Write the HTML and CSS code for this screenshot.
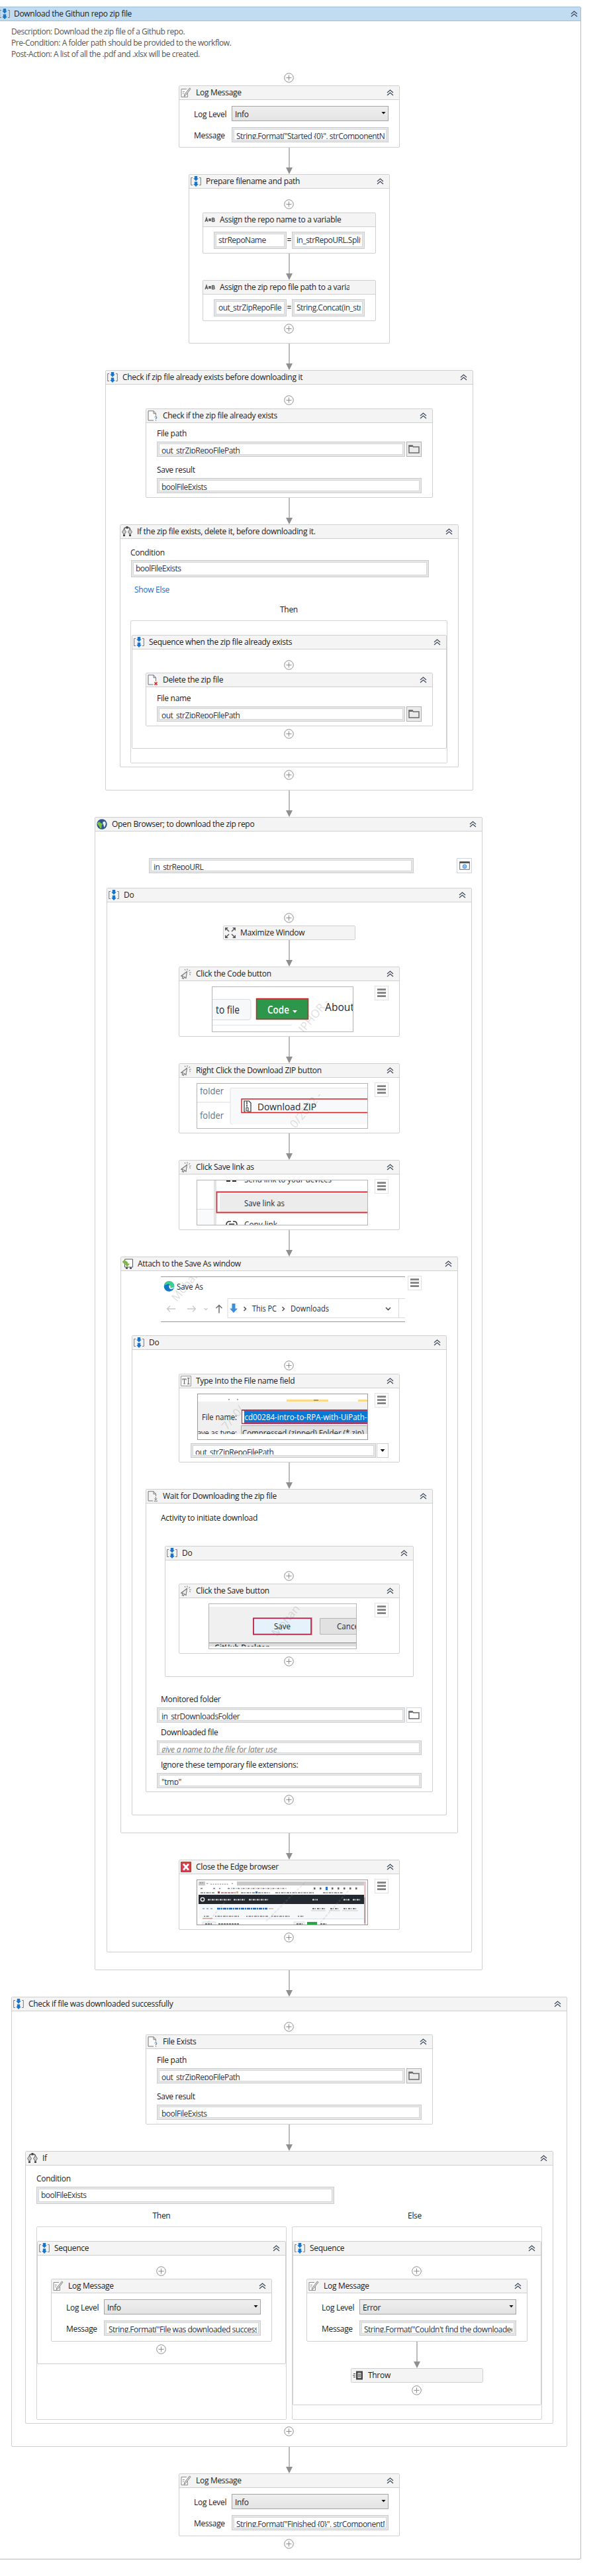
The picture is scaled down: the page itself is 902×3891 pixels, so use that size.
FILE: index.html
```html
<!DOCTYPE html>
<html lang="en">
<head>
<meta charset="utf-8">
<title>Download the Githun repo zip file</title>
<link rel="stylesheet" href="styles.css">
</head>
<body>
<svg class="defs" width="0" height="0">
  <symbol id="seq" viewBox="0 0 16 16"><path d="M3 2.5H.7v11H3M13 2.5h2.3v11H13" fill="none" stroke="#777" stroke-width="1"/><path d="M5.8 0h4.4v3.6h1.6L8 7.6 4.200 3.600h1.600zM5.800 8.400h4.400V12h1.600L8 16l-3.800-4h1.600z" fill="#1c74c9"/></symbol>
  <symbol id="up" viewBox="0 0 11 10"><path d="M1 5l4.500-4L10 5M1 9l4.500-4L10 9" fill="none" stroke="#3b4658" stroke-width="1.200"/></symbol>
  <symbol id="plus" viewBox="0 0 16 15"><circle cx="7.500" cy="7.500" r="6.800" fill="#fff" stroke="#8e8e8e"/><path d="M7.500 3.500v8M3.500 7.500h8" stroke="#8e8e8e"/></symbol>
  <symbol id="down" viewBox="0 0 10 40"><path d="M5 0v32" stroke="#8f8f8f" stroke-width="1.200"/><path d="M0 30h10L5 40z" fill="#8f8f8f"/></symbol>
  <symbol id="log" viewBox="0 0 16 16"><path d="M9 2.500H1v12h9.500V9" fill="#fafafa" stroke="#8c8c8c"/><path d="M13.500 1l1.500 1.200L7.500 12l-2.300 1.500.5-2.700z" fill="#ddd" stroke="#777" stroke-width=".9"/><path d="M3 6.500h3M3 9h2" stroke="#999"/></symbol>
  <symbol id="ab" viewBox="0 0 16 16"><path d="M1 11L3 5l2 6M1.800 9h2.400M11.500 5v6M11.500 5.500h2.200q1 0 1 1.200t-1 1.200h-2.200 2.500q1.200 0 1.200 1.300t-1.200 1.300h-2.500M6 7h4M6 9h4M8 6v4" fill="none" stroke="#555" stroke-width="1.300"/></symbol>
  <symbol id="fileq" viewBox="0 0 16 16"><path d="M9 15H1V.7h8l3.500 3.800V8M9 .7v4h3.500" fill="#fafafa" stroke="#777"/><path d="M10.800 10.500q.3-1.300 1.600-1.300 1.500 0 1.500 1.300 0 1-1.400 1.800v1M12.500 14.500v1.200" fill="none" stroke="#3a82d2" stroke-width="1.100"/></symbol>
  <symbol id="filex" viewBox="0 0 16 16"><path d="M8.500 15H1V.7h8l3.500 3.800V10M9 .7v4h3.500" fill="#fafafa" stroke="#6d7480"/><path d="M10.500 11.500l4 4M14.500 11.500l-4 4" stroke="#e02020" stroke-width="1.700"/></symbol>
  <symbol id="filed" viewBox="0 0 16 16"><path d="M8 15H1V.7h8l3.500 3.800V8M9 .7v4h3.500M9.500 15.300H15M12.300 9v4.500M10.300 11.500l2 2 2-2" fill="none" stroke="#777"/></symbol>
  <symbol id="if" viewBox="0 0 16 16"><path d="M3.500 5q0-3 2.500-3h4q2.500 0 2.500 3M3.500 10v5M12.500 10v5" fill="none" stroke="#555" stroke-width="1.400"/><path d="M6.500 0h3v3.500h-3zM2 12.500h3V15H2zM11 12.500h3V15h-3z" fill="#444"/><path d="M3.500 4l3 4.500-3 4-3-4zM12.500 4l3 4.500-3 4-3-4z" fill="#c9c9c9" stroke="#666"/></symbol>
  <symbol id="globe" viewBox="0 0 16 16"><circle cx="8" cy="8" r="7.700" fill="#2d558f"/><path d="M1 6.500q1-2 3-2.500l2 2 2.500 1.500Q9 9 7.500 10v3.500L6 14.500Q4 12 3.500 10.500 1.500 9.500 1 6.500z" fill="#7cc242"/><path d="M9.500 4.500q3-2 4 1t-2 7.500q-1-2-1-4-2-2-1-4.500z" fill="#e6eef5"/></symbol>
  <symbol id="max" viewBox="0 0 16 16"><path d="M2 2l4 4M14 2l-4 4M2 14l4-4M14 14l-4-4" stroke="#5a5a5a" stroke-width="1.500"/><path d="M0 0h5L0 5zM16 0h-5l5 5zM0 16h5l-5-5zM16 16h-5l5-5z" fill="#5a5a5a"/></symbol>
  <symbol id="click" viewBox="0 0 16 16"><path d="M9.500 4.500L.8 11.200l3 .4-1.600 2.700 2 1.200 1.600-2.800 2.200 2z" fill="#eee" stroke="#777" stroke-width="1.100"/><path d="M7 2.800L6.300.8M10 2.500V.3M12.300 4.300L14 2M13 6.500l2.500-.5M13 8.500l2 1" stroke="#777"/></symbol>
  <symbol id="attach" viewBox="0 0 16 16"><path d="M3.500 1h12v12h-12z" fill="#fff" stroke="#555"/><path d="M5 14.500h3M11 14.500h3" stroke="#333" stroke-width="2"/><path d="M0 5l4-3.500V4q4 0 4 4h2.500L7 12 4 8h1.500Q5.500 6.500 4 6.500V9z" fill="#7dbb42" stroke="#5c9a2b" stroke-width=".5"/></symbol>
  <symbol id="type" viewBox="0 0 16 16"><path d="M.5.500h15v15H.5z" fill="#f7f7f7" stroke="#999"/><path d="M3 6.500V5h5v1.500M5.500 5v7M4.300 12h2.400M10 3.500h3.500M10 12.500h3.500M11.700 3.500v9" fill="none" stroke="#666" stroke-width="1.100"/></symbol>
  <symbol id="close" viewBox="0 0 16 16"><path d="M.5.500h15v15H.5z" fill="#de3a4e" stroke="#9a4a32"/><path d="M4 3.500l8 9M12 3.500l-8 9" stroke="#fff" stroke-width="2.800"/></symbol>
  <symbol id="throw" viewBox="0 0 16 16"><path d="M5 1.500h10v13H5z" fill="#444"/><path d="M7.500 4h5v8h-5z" fill="#eee"/><path d="M8 6h4M8 8h4M8 10h4M1 5.500h3M0 8h4M1 10.500h3" stroke="#444"/></symbol>
  <symbol id="folder" viewBox="0 0 17 13"><path d="M1 12V1h5l1.500 2H16v9z" fill="none" stroke="#6b6b6b" stroke-width="1.500"/><path d="M.5.500h6V3h-6z" fill="#6b6b6b"/></symbol>
  <symbol id="menu" viewBox="0 0 13 14"><path d="M0 1.600h13M0 6.600h13M0 11.600h13" stroke="#808080" stroke-width="2.600"/></symbol>
  <symbol id="web" viewBox="0 0 16 13"><path d="M.7.700h14.600v11.600H.7z" fill="#fff" stroke="#666"/><path d="M.5.500h15v2.500h-15z" fill="#555"/><circle cx="8" cy="7.800" r="2.600" fill="none" stroke="#4a94e0" stroke-width="1.300"/><path d="M8 4.800v6M5 7.800h6" stroke="#4a94e0" stroke-width=".8"/></symbol>
</svg>

<main class="card root">
  <header class="head"><svg class="ico"><use href="#seq"/></svg><h1 class="title">Download the Githun repo zip file</h1><svg class="fold"><use href="#up"/></svg></header>
  <div class="notes">
    <p>Description: Download the zip file of a Github repo.</p>
    <p>Pre-Condition: A folder path should be provided to the workflow.</p>
    <p>Post-Action: A list of all the .pdf and .xlsx will be created.</p>
  </div>
  <div class="lead"><svg class="plus"><use href="#plus"/></svg></div>

  <section class="card w-log log-short">
    <header class="head"><svg class="ico"><use href="#log"/></svg><h2 class="title">Log Message</h2><svg class="fold"><use href="#up"/></svg></header>
    <div class="log-body">
      <label>Log Level</label><div class="select">Info<i></i></div>
      <label>Message</label><div class="field"><span>String.Format("Started {0}", strComponentName)</span></div>
    </div>
  </section>
  <svg class="arrow"><use href="#down"/></svg>

  <section class="card w-prep">
    <header class="head"><svg class="ico"><use href="#seq"/></svg><h2 class="title">Prepare filename and path</h2><svg class="fold"><use href="#up"/></svg></header>
    <div class="lead tall"><svg class="plus"><use href="#plus"/></svg></div>
    <section class="card w-assign">
      <header class="head"><svg class="ico"><use href="#ab"/></svg><h3 class="title">Assign the repo name to a variable</h3></header>
      <div class="assign"><div class="field big"><span>strRepoName</span></div><b>=</b><div class="field big"><span>in_strRepoURL.Split</span></div></div>
    </section>
    <svg class="arrow"><use href="#down"/></svg>
    <section class="card w-assign">
      <header class="head"><svg class="ico"><use href="#ab"/></svg><h3 class="title">Assign the zip repo file path to a variable</h3></header>
      <div class="assign"><div class="field big"><span>out_strZipRepoFile</span></div><b>=</b><div class="field big"><span>String.Concat(in_str</span></div></div>
    </section>
    <div class="tail"><svg class="plus"><use href="#plus"/></svg></div>
  </section>
  <svg class="arrow"><use href="#down"/></svg>

  <section class="card w-check">
    <header class="head"><svg class="ico"><use href="#seq"/></svg><h2 class="title">Check if zip file already exists before downloading it</h2><svg class="fold"><use href="#up"/></svg></header>
    <div class="lead tall"><svg class="plus"><use href="#plus"/></svg></div>
    <section class="card w-file file-tight">
      <header class="head"><svg class="ico"><use href="#fileq"/></svg><h3 class="title">Check if the zip file already exists</h3><svg class="fold"><use href="#up"/></svg></header>
      <div class="form">
        <label>File path</label>
        <div class="row"><div class="field"><span>out_strZipRepoFilePath</span></div><div class="btn"><svg class="folder"><use href="#folder"/></svg></div></div>
        <label class="next">Save result</label>
        <div class="field"><span>boolFileExists</span></div>
      </div>
    </section>
    <svg class="arrow"><use href="#down"/></svg>
    <section class="card w-if1">
      <header class="head"><svg class="ico"><use href="#if"/></svg><h3 class="title">If the zip file exists, delete it, before downloading it.</h3><svg class="fold"><use href="#up"/></svg></header>
      <div class="cond">
        <label>Condition</label>
        <div class="field big"><span>boolFileExists</span></div>
        <a class="link">Show Else</a>
        <p class="branch-name">Then</p>
        <div class="branch">
          <section class="card w-inner">
            <header class="head"><svg class="ico"><use href="#seq"/></svg><h4 class="title">Sequence when the zip file already exists</h4><svg class="fold"><use href="#up"/></svg></header>
            <div class="lead"><svg class="plus"><use href="#plus"/></svg></div>
            <section class="card w-file delete">
              <header class="head"><svg class="ico"><use href="#filex"/></svg><h5 class="title">Delete the zip file</h5><svg class="fold"><use href="#up"/></svg></header>
              <div class="form">
                <label>File name</label>
                <div class="row"><div class="field"><span>out_strZipRepoFilePath</span></div><div class="btn"><svg class="folder"><use href="#folder"/></svg></div></div>
              </div>
            </section>
            <div class="tail"><svg class="plus"><use href="#plus"/></svg></div>
          </section>
        </div>
      </div>
    </section>
    <div class="tail tall"><svg class="plus"><use href="#plus"/></svg></div>
  </section>
  <svg class="arrow"><use href="#down"/></svg>

  <section class="card w-open">
    <header class="head"><svg class="ico"><use href="#globe"/></svg><h2 class="title">Open Browser; to download the zip repo</h2><svg class="fold"><use href="#up"/></svg></header>
    <div class="url-row"><div class="field"><span>in_strRepoURL</span></div><div class="btn white"><svg class="web"><use href="#web"/></svg></div></div>
    <section class="card w-do1">
      <header class="head"><svg class="ico"><use href="#seq"/></svg><h3 class="title">Do</h3><svg class="fold"><use href="#up"/></svg></header>
      <div class="lead"><svg class="plus"><use href="#plus"/></svg></div>
      <section class="card mini"><header class="head"><svg class="ico"><use href="#max"/></svg><h4 class="title">Maximize Window</h4></header></section>
      <svg class="arrow"><use href="#down"/></svg>

      <section class="card w-log click">
        <header class="head"><svg class="ico"><use href="#click"/></svg><h4 class="title">Click the Code button</h4><svg class="fold"><use href="#up"/></svg></header>
        <div class="shot-row"><div class="shot"><svg width="212" height="67">
          <rect x="-6" y="18.500" width="64" height="31" rx="4" fill="#f6f8fa" stroke="#d8dce0"/>
          <path d="M0 57.500h120" stroke="#e1e4e8"/>
          <text x="5" y="40" class="t15" textLength="36" lengthAdjust="spacingAndGlyphs">to file</text>
          <rect x="66.500" y="17.500" width="78" height="31" fill="#2c974b" stroke="#d02028" stroke-width="1.500"/>
          <text x="83" y="40" class="t15 bold" fill="#fff" textLength="33" lengthAdjust="spacingAndGlyphs">Code</text><path d="M121 35h7l-3.500 4z" fill="#fff"/>
          <text x="170" y="36" class="t15" textLength="44" lengthAdjust="spacingAndGlyphs">About</text>
          <text transform="translate(138 70) rotate(-50)" class="mark">IPHOR -</text>
        </svg></div><div class="menu"><svg><use href="#menu"/></svg></div></div>
      </section>
      <svg class="arrow"><use href="#down"/></svg>

      <section class="card w-log click">
        <header class="head"><svg class="ico"><use href="#click"/></svg><h4 class="title">Right Click the Download ZIP button</h4><svg class="fold"><use href="#up"/></svg></header>
        <div class="shot-row"><div class="shot"><svg width="257" height="67">
          <text x="4" y="16" class="t14" fill="#6a7280" textLength="36" lengthAdjust="spacingAndGlyphs">folder</text>
          <rect width="48" height="6" fill="#fff"/>
          <text x="4" y="53" class="t14" fill="#6a7280" textLength="36" lengthAdjust="spacingAndGlyphs">folder</text>
          <path d="M0 28h50" stroke="#d5d9de"/>
          <path d="M50 6.500h207v55H53q-3 0-3-4z" fill="#f7f9fb"/><path d="M257 6.500H50v51q0 3 3 4" fill="none" stroke="#dfe2e6"/>
          <text transform="translate(148 68) rotate(-50)" class="mark">0/2022 -</text>
          <path d="M258 23H67v20.500h191" fill="none" stroke="#d02028" stroke-width="1.400"/>
          <path d="M73 26h5l3 3v13h-5M74 26h-3v16h2" fill="none" stroke="#333" stroke-width="1.200"/><path d="M75 27v8" stroke="#333" stroke-width="2" stroke-dasharray="1.500 1"/><path d="M74 36h3v5h-3z" fill="none" stroke="#333"/>
          <text x="91" y="40" class="t14" textLength="89" lengthAdjust="spacingAndGlyphs">Download ZIP</text>
        </svg></div><div class="menu"><svg><use href="#menu"/></svg></div></div>
      </section>
      <svg class="arrow"><use href="#down"/></svg>

      <section class="card w-log click">
        <header class="head"><svg class="ico"><use href="#click"/></svg><h4 class="title">Click Save link as</h4><svg class="fold"><use href="#up"/></svg></header>
        <div class="shot-row"><div class="shot"><svg width="257" height="67">
          <path d="M0 44h29v23H0z" fill="#f8fafb"/><path d="M0 43.500h29" stroke="#ddd"/><path d="M25 0h4v67h-4z" fill="#e4e4e4"/>
          <path d="M44 0h6v2h-6zM53 0h6v2h-6z" fill="#333"/><text x="71" y="3" class="t12" textLength="132" lengthAdjust="spacingAndGlyphs">Send link to your devices</text>
          <path d="M34 20h223v28H34z" fill="#ececec"/><path d="M258 17.500H29.500v31H258" fill="none" stroke="#d5303a" stroke-width="1.800"/>
          <text x="71" y="39" class="t12" textLength="61" lengthAdjust="spacingAndGlyphs">Save link as</text>
          <path d="M44 67q0-5 5-5h2M54 62h2q4 0 4 5M48 66h8" fill="none" stroke="#333" stroke-width="1.500"/><text x="71" y="71" class="t12" textLength="50" lengthAdjust="spacingAndGlyphs">Copy link</text>
        </svg></div><div class="menu"><svg><use href="#menu"/></svg></div></div>
      </section>
      <svg class="arrow"><use href="#down"/></svg>

      <section class="card w-attach">
        <header class="head"><svg class="ico"><use href="#attach"/></svg><h4 class="title">Attach to the Save As window</h4><svg class="fold"><use href="#up"/></svg></header>
        <div class="window-row"><div class="shot open"><svg width="369" height="67">
          <text transform="translate(24 38) rotate(-50)" class="mark">Mohan</text>
          <circle cx="12.500" cy="14" r="7.800" fill="#1477c4"/><path d="M5 13q1-7 8-7 7 1 7.300 7-.3 4-5 4-3-1-1-4-2-4-5-2-3 1-4.300 2z" fill="#3ecf8e"/><path d="M13.500 12.500q-1 4 2 5l4-1.500" fill="none" stroke="#fff" stroke-width="1.800"/>
          <text x="24" y="19" class="t12" textLength="40" lengthAdjust="spacingAndGlyphs">Save As</text>
          <path d="M369 32.500H101v29h268M359.500 32.500v29" fill="none" stroke="#d9d9d9"/>
          <path d="M22 48H9.500M14 43.500L9.500 48l4.500 4.500M40 48h12.500M48 43.500l4.500 4.500-4.500 4.500M65.500 47l2.500 2.500 2.500-2.500" fill="none" stroke="#c9c9c9" stroke-width="1.300"/>
          <path d="M88 54.500v-12M83.500 47l4.500-4.500 4.500 4.500" fill="none" stroke="#666" stroke-width="1.400"/>
          <path d="M107.500 40h5v7.500h3.500l-6 6.500-6-6.500h3.500z" fill="#3c8fdc"/>
          <path d="M125.500 45l3 3-3 3M183.500 45l3 3-3 3M340 46l3.500 3.500L347 46" fill="none" stroke="#555" stroke-width="1.600"/>
          <text x="138" y="52" class="t12" textLength="37" lengthAdjust="spacingAndGlyphs">This PC</text><text x="196" y="52" class="t12" textLength="58" lengthAdjust="spacingAndGlyphs">Downloads</text>
        </svg></div><div class="menu"><svg><use href="#menu"/></svg></div></div>

        <section class="card w-inner">
          <header class="head"><svg class="ico"><use href="#seq"/></svg><h5 class="title">Do</h5><svg class="fold"><use href="#up"/></svg></header>
          <div class="lead tall"><svg class="plus"><use href="#plus"/></svg></div>
          <section class="card w-log typeinto">
            <header class="head"><svg class="ico"><use href="#type"/></svg><h6 class="title">Type Into the File name field</h6><svg class="fold"><use href="#up"/></svg></header>
            <div class="shot-row"><div class="shot dark"><svg width="256" height="68">
              <path d="M0 11h256v49H0z" fill="#f0f0f0"/><path d="M134 8h63v3h-63zM242 8h14v3h-14z" fill="#fbdc86"/><path d="M46 8h2M59 8h2M175 9h7" stroke="#555"/>
              <text transform="translate(28 74) rotate(-50)" class="mark">R - 7/10/</text>
              <text x="6" y="39" class="t12" textLength="53" lengthAdjust="spacingAndGlyphs">File name:</text>
              <path d="M66 23h190v22H66z" fill="#8a4a84"/><path d="M70 26h186v16H70z" fill="#0878d7"/><path d="M67 25h3v19h-3z" fill="#fff"/><path d="M256 24H66.500v20H256" fill="none" stroke="#d02838" stroke-width="1.200"/>
              <text x="70.500" y="39" class="t12" fill="#fff" textLength="185" lengthAdjust="spacingAndGlyphs">cd00284-intro-to-RPA-with-UiPath-</text>
              <path d="M65.500 68V47.500H256V68" fill="#e1e1e1" stroke="#adadad"/>
              <text x="-1" y="63" class="t12" textLength="60" lengthAdjust="spacingAndGlyphs">ave as type:</text><text x="67" y="63" class="t12" textLength="184" lengthAdjust="spacingAndGlyphs">Compressed (zipped) Folder (*.zip)</text>
              <path d="M0 60h256v8H0z" fill="#fff"/>
            </svg></div><div class="menu"><svg><use href="#menu"/></svg></div></div>
            <div class="combo"><div class="field"><span>out_strZipRepoFilePath</span></div><div class="drop"><i></i></div></div>
          </section>
          <svg class="arrow"><use href="#down"/></svg>

          <section class="card w-file wait">
            <header class="head"><svg class="ico"><use href="#filed"/></svg><h6 class="title">Wait for Downloading the zip file</h6><svg class="fold"><use href="#up"/></svg></header>
            <p class="activity">Activity to initiate download</p>
            <section class="card w-do3">
              <header class="head"><svg class="ico"><use href="#seq"/></svg><h6 class="title">Do</h6><svg class="fold"><use href="#up"/></svg></header>
              <div class="lead"><svg class="plus"><use href="#plus"/></svg></div>
              <section class="card w-log click">
                <header class="head"><svg class="ico"><use href="#click"/></svg><h6 class="title">Click the Save button</h6><svg class="fold"><use href="#up"/></svg></header>
                <div class="shot-row"><div class="shot"><svg width="222" height="67">
                  <path d="M0 4h222v55H0z" fill="#f0f0f0"/><path d="M0 59h222v5H0z" fill="#ddd"/><path d="M0 58.500h222" stroke="#888"/>
                  <path d="M67 21h88v25H67z" fill="#e5f1fb" stroke="#ff8a8a" stroke-width="2"/><path d="M67 21.500h87v24H67z" fill="none" stroke="#ad2348" stroke-width="1.600"/>
                  <text transform="translate(102 50) rotate(-50)" class="mark">Mohan</text>
                  <text x="98" y="38" class="t12" textLength="25" lengthAdjust="spacingAndGlyphs">Save</text>
                  <path d="M167.500 21.500H230v24h-62.500z" fill="#e1e1e1" stroke="#b5b5b5"/><text x="193" y="38" class="t12" textLength="36" lengthAdjust="spacingAndGlyphs">Cancel</text>
                  <text x="8" y="70" class="t12 bold" textLength="84" lengthAdjust="spacingAndGlyphs">GitHub Desktop</text><path d="M0 64h222v3H0z" fill="#fff"/>
                </svg></div><div class="menu"><svg><use href="#menu"/></svg></div></div>
              </section>
              <div class="tail tall"><svg class="plus"><use href="#plus"/></svg></div>
            </section>
            <div class="form watch">
              <label>Monitored folder</label>
              <div class="row"><div class="field"><span>in_strDownloadsFolder</span></div><div class="btn white"><svg class="folder"><use href="#folder"/></svg></div></div>
              <label>Downloaded file</label>
              <div class="field hint"><span>give a name to the file for later use</span></div>
              <label>Ignore these temporary file extensions:</label>
              <div class="field"><span>"tmp"</span></div>
            </div>
          </section>
          <div class="tail tall"><svg class="plus"><use href="#plus"/></svg></div>
        </section>
        <div class="foot"></div>
      </section>
      <svg class="arrow"><use href="#down"/></svg>

      <section class="card w-log click">
        <header class="head"><svg class="ico"><use href="#close"/></svg><h4 class="title">Close the Edge browser</h4><svg class="fold"><use href="#up"/></svg></header>
        <div class="shot-row"><div class="shot dark"><svg width="257" height="67">
          <path d="M2 2h252v6H2z" fill="#c9c9c9"/><path d="M12 2h48v6H12z" fill="#fff"/><path d="M4 4h5M14 5h4M20 6h28M52 5h3" stroke="#777" stroke-dasharray="2 1.500"/>
          <path d="M5 12.500h3M24 12.500h3M33 12.500h2M46 12.500h90" stroke="#777" stroke-width="1.500" stroke-dasharray="3 2 1 1.500"/><path d="M176 12.500h66" stroke="#666" stroke-width="3" stroke-dasharray="2.500 6.500"/>
          <path d="M194 10h3v5h-3zM88 17h3v3h-3z" fill="#2772c8"/><path d="M5 19h22M66 19h22M92 19h18M118 19h58M190 19h30" stroke="#777" stroke-width="1.500" stroke-dasharray="4 1 2 1.500"/><path d="M31 17h3v3h-3z" fill="#d33"/><path d="M36 19h22" stroke="#a66" stroke-width="1.500" stroke-dasharray="4 1"/><path d="M59 17h3v3h-3z" fill="#e3b52c"/>
          <path d="M2 22h250v14H2z" fill="#24292f"/><circle cx="8" cy="29" r="2.700" fill="none" stroke="#fff" stroke-width="1.300"/><path d="M16 29.500h35M55 29.500h17M78 29.500h30M174 29.500h8M221 29.500h10M235 29.500h11" stroke="#ddd" stroke-width="2" stroke-dasharray="3 1 1 1"/>
          <path d="M2 36h250v22H2z" fill="#f6f8fa"/><path d="M8 43h18" stroke="#73a3cf" stroke-width="1.500" stroke-dasharray="3 3"/><path d="M30 43h76" stroke="#1769c2" stroke-width="2.500" stroke-dasharray="5 1 2 1"/><path d="M108 43h7" stroke="#999"/>
          <path d="M174 43h19M201 43h14M221 43h20" stroke="#777" stroke-width="2" stroke-dasharray="3 1 1 2"/><path d="M172 46h22M199 46h17M219 46h24" stroke="#bbb" stroke-width=".8"/>
          <path d="M10 54.500h8M27 54.500h36M74 54.500h33M112 54.500h29M152 54.500h9" stroke="#777" stroke-width="1.700" stroke-dasharray="2 1.500 4 1"/><path d="M8 57.800h15" stroke="#ef7b62" stroke-width="1.200"/><path d="M23 58.500h229" stroke="#d8e0ea"/>
          <path d="M8 63h20v4H8zM146 63h16v4h-16z" fill="#f0f3f6" stroke="#ddd"/><path d="M12 66h10M32 66h31M150 66h9M186 66h9" stroke="#555" stroke-width="1.500" stroke-dasharray="3 1"/><path d="M166 63h15v4h-15z" fill="#2da44e"/>
          <path d="M252 2h3v65h-3z" fill="#e8c9cd"/><path d="M252 26h2v39h-2z" fill="#aaa"/>
          <path d="M16 64l28-34M104 62l60-60M186 64l44-50" stroke="#999" stroke-opacity=".2" stroke-dasharray="4 2" stroke-width="2"/>
        </svg></div><div class="menu"><svg><use href="#menu"/></svg></div></div>
      </section>
      <div class="tail"><svg class="plus"><use href="#plus"/></svg></div>
    </section>
    <div class="foot"></div>
  </section>
  <svg class="arrow"><use href="#down"/></svg>

  <section class="card w-done">
    <header class="head"><svg class="ico"><use href="#seq"/></svg><h2 class="title">Check if file was downloaded successfully</h2><svg class="fold"><use href="#up"/></svg></header>
    <div class="lead"><svg class="plus"><use href="#plus"/></svg></div>
    <section class="card w-file exists">
      <header class="head"><svg class="ico"><use href="#fileq"/></svg><h3 class="title">File Exists</h3><svg class="fold"><use href="#up"/></svg></header>
      <div class="form">
        <label>File path</label>
        <div class="row"><div class="field"><span>out_strZipRepoFilePath</span></div><div class="btn"><svg class="folder"><use href="#folder"/></svg></div></div>
        <label class="next">Save result</label>
        <div class="field"><span>boolFileExists</span></div>
      </div>
    </section>
    <svg class="arrow"><use href="#down"/></svg>
    <section class="card w-if2">
      <header class="head"><svg class="ico"><use href="#if"/></svg><h3 class="title">If</h3><svg class="fold"><use href="#up"/></svg></header>
      <div class="cond">
        <label>Condition</label>
        <div class="field big"><span>boolFileExists</span></div>
        <div class="columns">
          <p class="branch-name">Then</p><p class="branch-name else">Else</p>
          <div class="branch">
            <section class="card w-branch">
              <header class="head"><svg class="ico"><use href="#seq"/></svg><h4 class="title">Sequence</h4><svg class="fold"><use href="#up"/></svg></header>
              <div class="lead"><svg class="plus"><use href="#plus"/></svg></div>
              <section class="card w-log log-card">
                <header class="head"><svg class="ico"><use href="#log"/></svg><h5 class="title">Log Message</h5><svg class="fold"><use href="#up"/></svg></header>
                <div class="log-body">
                  <label>Log Level</label><div class="select">Info<i></i></div>
                  <label>Message</label><div class="field"><span>String.Format("File was downloaded successfully")</span></div>
                </div>
              </section>
              <div class="tail"><svg class="plus"><use href="#plus"/></svg></div>
            </section>
          </div>
          <div class="branch">
            <section class="card w-branch">
              <header class="head"><svg class="ico"><use href="#seq"/></svg><h4 class="title">Sequence</h4><svg class="fold"><use href="#up"/></svg></header>
              <div class="lead"><svg class="plus"><use href="#plus"/></svg></div>
              <section class="card w-log log-card">
                <header class="head"><svg class="ico"><use href="#log"/></svg><h5 class="title">Log Message</h5><svg class="fold"><use href="#up"/></svg></header>
                <div class="log-body">
                  <label>Log Level</label><div class="select">Error<i></i></div>
                  <label>Message</label><div class="field"><span>String.Format("Couldn't find the downloaded file")</span></div>
                </div>
              </section>
              <svg class="arrow"><use href="#down"/></svg>
              <section class="card mini"><header class="head"><svg class="ico"><use href="#throw"/></svg><h5 class="title">Throw</h5></header></section>
              <div class="tail"><svg class="plus"><use href="#plus"/></svg></div>
            </section>
          </div>
        </div>
      </div>
    </section>
    <div class="tail tall"><svg class="plus"><use href="#plus"/></svg></div>
  </section>
  <svg class="arrow"><use href="#down"/></svg>

  <section class="card w-log log-card">
    <header class="head"><svg class="ico"><use href="#log"/></svg><h2 class="title">Log Message</h2><svg class="fold"><use href="#up"/></svg></header>
    <div class="log-body">
      <label>Log Level</label><div class="select">Info<i></i></div>
      <label>Message</label><div class="field"><span>String.Format("Finished {0}", strComponentName)</span></div>
    </div>
  </section>
  <div class="tail tall"><svg class="plus"><use href="#plus"/></svg></div>
</main>
</body>
</html>
```
FILE: styles.css
```css
* { box-sizing: border-box; }
html, body { margin: 0; overflow: hidden; background: #fff; }
body {
  height: 3891px;
  font: 12px/18px "Open Sans", "Noto Sans", sans-serif;
  letter-spacing: -0.3px;
  color: #1b1b1b;
}
h1, h2, h3, h4, h5, h6, p { margin: 0; font-size: inherit; font-weight: 400; }
svg { display: block; overflow: hidden; flex: none; }
.defs { position: absolute; }

/* Activity cards */
.card {
  display: flex;
  flex-direction: column;
  align-items: center;
  flex: none;
  border: 1px solid #cfcfcf;
  border-radius: 2px;
  background: #fff;
}
.head {
  display: flex;
  align-items: center;
  align-self: stretch;
  flex: none;
  height: 21px;
  padding: 0 8px 0 2px;
  border-bottom: 1px solid #cfcfcf;
  background: #f4f4f4;
}
.ico { width: 16px; height: 16px; margin-right: 7px; }
.title { flex: 1; min-width: 0; overflow: hidden; white-space: nowrap; }
.fold { width: 11px; height: 10px; }
.w-assign .title { margin-right: 31px; }

.root { width: 882px; margin: 10px 0 0 -4px; border-color: #9cc0d8; }
.root > .head { background: #c1dbf0; border-color: #9cc0d8; padding-right: 4px; }
.root > .head .title { margin-left: -1px; }
.notes { align-self: stretch; height: 62px; padding: 7px 0 0 20px; line-height: 17px; letter-spacing: -0.45px; color: #555; }

.lead, .tail { flex: none; height: 35px; padding-top: 16px; }
.lead.tall { height: 36px; }
.tail { height: 33px; padding-top: 4px; }
.tail.tall { height: 34px; }
.foot { flex: none; height: 26px; }
.plus { width: 16px; height: 15px; }
.arrow { width: 10px; height: 40px; }

.w-log { width: 334px; }
.w-prep { width: 304px; }
.w-assign { width: 262px; height: 62px; }
.w-check { width: 556px; }
.w-file { width: 434px; height: 136px; }
.w-file.file-tight { height: 135px; }
.w-file.delete { height: 81px; }
.w-file.wait { height: 458px; }
.w-if1 { width: 512px; height: 367px; }
.w-inner { width: 476px; }
.w-open { width: 586px; margin-right: 2px; }
.w-do1 { width: 552px; margin-left: 2px; }
.w-attach { width: 510px; }
.w-do3 { width: 376px; }
.w-done { width: 840px; }
.w-if2 { width: 798px; height: 412px; }
.w-branch { width: 376px; }
.mini { width: 200px; height: 22px; }
.mini .head { height: 20px; border: 0; }
.click { height: 106px; }
.typeinto { height: 134px; }
.log-short { height: 94px; }
.log-card { height: 95px; }

/* Inputs */
.field {
  height: 23px;
  min-width: 0;
  padding: 3px 5px 3px 6px;
  border: 1px solid #cbccce;
  box-shadow: inset 0 0 0 2px #e5e6e8, inset 0 0 0 3px #d6d8da;
  letter-spacing: -0.5px;
  color: #2c3447;
}
.field span { display: block; height: 14px; line-height: 19px; overflow: hidden; white-space: nowrap; }
.field.big { height: 26px; }
.field.big span { height: 19px; line-height: 18px; }
.hint { height: 22px; font-style: italic; letter-spacing: -0.25px; color: #777; }
.row { display: flex; gap: 2px; }
.row .field { flex: 1; }
.btn {
  display: flex;
  align-items: center;
  justify-content: center;
  width: 23px;
  height: 23px;
  border: 1px solid #b0b0b0;
  background: #ebebeb;
}
.btn.white { background: #fff; border-color: #cfd4da; }
.folder { width: 17px; height: 13px; }
.web { width: 16px; height: 13px; }

.log-body {
  display: grid;
  grid-template-columns: 57px 237px;
  gap: 9px 0;
  align-self: stretch;
  padding: 9px 0 0 22px;
}
.log-body label { line-height: 26px; height: 23px; white-space: nowrap; }
.select {
  display: flex;
  align-items: center;
  justify-content: space-between;
  height: 23px;
  padding: 2px 3px 0 4px;
  border: 1px solid #a5a5a5;
  background: linear-gradient(#efefef, #e3e3e3);
}
i { width: 7px; height: 4px; margin-top: -4px; background: #111; clip-path: polygon(0 0, 100% 0, 50% 100%); }

.assign { display: grid; grid-template-columns: 110px 8px 110px; align-self: stretch; padding: 7px 0 0 16px; line-height: 26px; }
.assign b { font-weight: 400; text-align: center; letter-spacing: 0; }

.form { align-self: stretch; padding: 8px 16px 0; }
.form label { display: block; margin-bottom: 3px; }
.form .next { margin-top: 11px; }
.file-tight .form { padding-top: 7px; }
.activity { align-self: stretch; height: 64px; padding: 13px 0 0 22px; }
.watch { padding-top: 19px; }
.watch label { margin: 6px 0 3px 6px; }

.cond { align-self: stretch; padding: 12px 16px 0 15px; }
.cond > label { display: block; margin-bottom: 2px; }
.cond > .field { width: 450px; margin-left: 1px; }
.link { display: block; margin: 10px 0 0 6px; color: #1a6fbf; }
.branch-name { text-align: center; }
.link + .branch-name { margin: 12px 0 7px; }
.branch { border: 1px solid #d4d4d4; border-radius: 2px; padding: 21px 1px; }
.columns { display: grid; grid-template-columns: 378px 378px; grid-template-rows: 18px 292px; gap: 7px 8px; margin-top: 9px; }
.columns .branch { padding: 21px 0; }
.else { padding-right: 7px; }
.w-if2 .cond { padding: 11px 16px 0; }
.w-if2 .cond > label { margin-bottom: 3px; }
.w-if2 .cond > .field { margin-left: 0; }

.url-row { display: flex; align-self: stretch; height: 85px; padding: 40px 0 0 81px; }
.url-row .field { width: 400px; }
.url-row .btn { margin-left: 65px; }

/* Element screenshots */
.shot-row { display: flex; align-self: stretch; align-items: flex-start; justify-content: space-between; padding: 7px 16px 0; }
.shot { border: 1px solid #b4b4b4; margin: 1px auto 0; }
.shot.dark { border-color: #9a9a9a; }
.shot.open { border-width: 1px 0; margin: 1px 0 0; border-color: #999; height: 69px; }
.menu { display: flex; align-items: center; justify-content: center; width: 21px; height: 22px; border: 1px solid #e0e0e0; }
.menu svg { width: 13px; height: 14px; }
.window-row { display: flex; align-self: stretch; align-items: flex-start; gap: 4px; height: 97px; padding: 7px 0 0 60px; }
.combo { display: flex; align-self: stretch; gap: 1px; padding: 5px 16px 0 17px; }
.combo .field { flex: 1; height: 22px; }
.combo .field span { height: 13px; }
.drop { display: flex; align-items: center; justify-content: center; width: 18px; height: 22px; border: 1px solid #cbccce; }
.drop i { margin: 0; }

text { fill: #24292f; letter-spacing: 0; }
text[fill="#fff"] { fill: #fff; }
text[fill="#6a7280"] { fill: #6a7280; }
.t12 { font-size: 12.5px; }
.t14 { font-size: 14.5px; }
.t15 { font-size: 15.5px; }
.bold { font-weight: 600; }
.mark { font-size: 17px; fill: #888; fill-opacity: .28; }
```
